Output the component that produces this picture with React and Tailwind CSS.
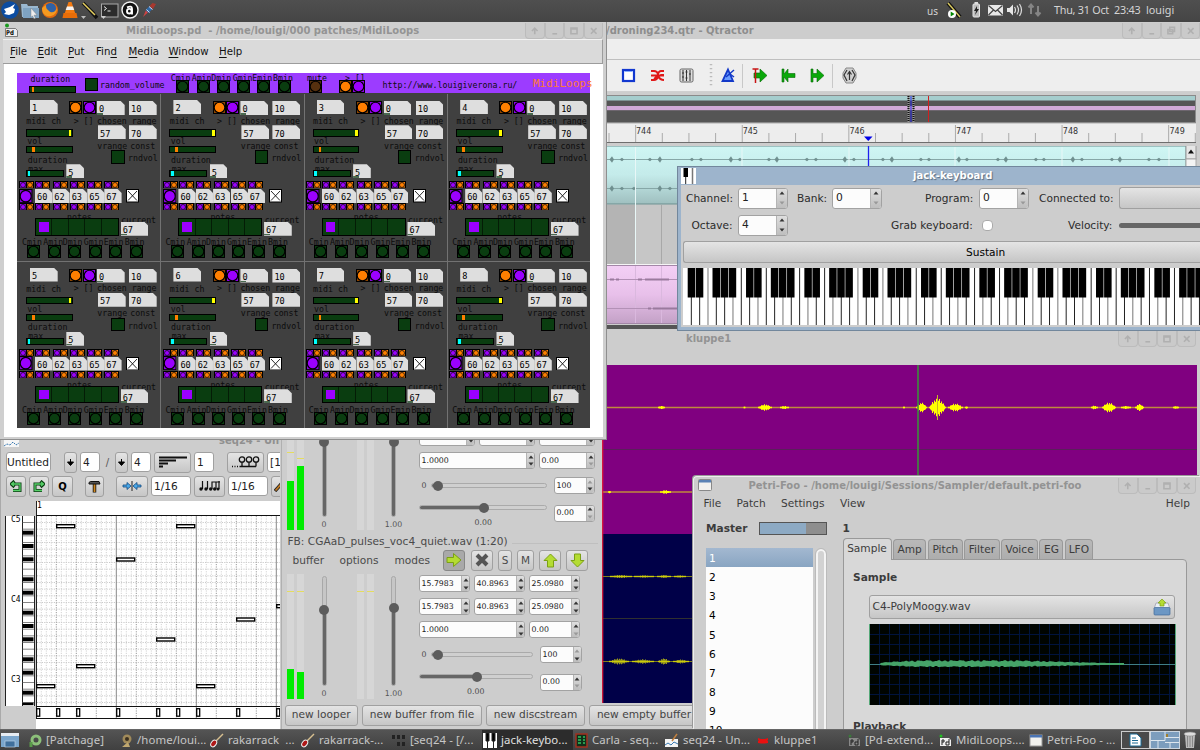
import React from "react";

const UI = "font-['DejaVu_Sans',sans-serif]";
const MONO = "font-['DejaVu_Sans_Mono',monospace]";
const PANEL = "font-['Noto_Sans',sans-serif]";

/* ---------- shared widgets ---------- */

function WinButtons({ className = "", mid = "max" }) {
  const glyphs = [
    <path key="u" d="M9 12V6M6 8.5L9 5.5L12 8.5" />,
    <path key="m" d="M6.5 11.5h5" />,
    mid === "max" ? <path key="x" d="M6 5.5h6.5v6H6zM6 6.3h6.5" /> : <path key="x" d="M8 4.500h5v4.500h-5zM6 7h5v4.500H6z" />,
    <path key="c" d="M6 5.5l6 6M12 5.500l-6 6" />,
  ];
  return (
    <div className={"flex h-4 " + className}>
      {glyphs.map((g, i) => (
        <div key={i} className="h-4 flex-1 rounded-b-sm border border-t-0 border-[#bcbcbc] bg-[#cacaca]">
          <svg viewBox="0 0 18 16" className="h-full w-full" fill="none" stroke="#b0b0b0" strokeWidth="1.700">{g}</svg>
        </div>
      ))}
    </div>
  );
}

function Spin({ value, className = "", small = false, dimUp = false, dimDown = false }) {
  return (
    <div className={"flex overflow-hidden rounded-[3px] border border-[#a2a2a2] bg-[#fcfcfc] " + className}>
      <div className={"flex flex-1 items-center leading-none text-[#222] " + (small ? "pl-[2px] text-[7.8px]" : "pl-[3px] text-[10.7px]")}>{value}</div>
      <div className={"flex flex-col items-center justify-around border-l border-[#b4b4b4] bg-linear-to-b from-[#dedede] to-[#bebebe] " + (small ? "w-[8px]" : "w-[11px]")}>
        <svg width="6" height="4" viewBox="0 0 6 4"><path d="M0.500 3.500L3 0.500L5.500 3.500z" fill={dimUp ? "#999" : "#333"} /></svg>
        <svg width="6" height="4" viewBox="0 0 6 4"><path d="M0.500 0.500L3 3.500L5.500 0.500z" fill={dimDown ? "#999" : "#333"} /></svg>
      </div>
    </div>
  );
}

const BTN = "flex items-center rounded-[3px] border border-[#a0a0a0] bg-linear-to-b from-[#e4e4e4] to-[#c6c6c6] ";

/* ---------- top panel ---------- */

function TopPanel() {
  return (
    <div className={"absolute inset-x-0 top-0 flex h-[22px] items-center bg-linear-to-b from-[#4f4f4f] to-[#454545] text-[10.800px] leading-none text-[#d4d4d4] " + PANEL}>
      <svg width="160" height="22" viewBox="0 0 160 22">
        <circle cx="10" cy="10" r="8.800" fill="#0c4ca0" />
        <path d="M4 9l6-2 5-3-2 4 2 1-1 4-5 2-5-1 2-2z" fill="#fff" />
        <path d="M21 4h6l1 2h10v11H22z" fill="#9ab8d0" /><path d="M23 8h16v10H23z" fill="#7fa3c2" />
        <path d="M31 8l6 7-3 .2 1.500 3-1.500.6-1.500-3-1.500 1.500z" fill="#eee" stroke="#777" strokeWidth=".4" />
        <circle cx="50" cy="10" r="8" fill="#e06a10" /><circle cx="50.500" cy="8.500" r="5.500" fill="#2f62a8" />
        <path d="M42 8c0 7 5 9 9 8s6-4 6-8c-2 5-6 5-8 3s-3-2-3-6z" fill="#f59a20" />
        <path d="M68.500 2h3l4 12h-11z" fill="#f47a10" /><path d="M67 6.500h6l1.200 3.500h-8.500z" fill="#f3f3f3" /><path d="M63.500 13h13l1 5h-15z" fill="#e96d08" />
        <path d="M81 16h5l-2.500 3z" fill="#bbb" /><path d="M83 3l11 11M88 8l9 10" stroke="#111" strokeWidth="3.500" /><path d="M83 3l12 12" stroke="#e6d060" strokeWidth="1.500" />
        <rect x="101.500" y="4" width="16.500" height="13" fill="#2c2c2c" stroke="#aaa" /><path d="M104 6.500l2.500 2-2.500 2M107.500 11h3" stroke="#eee" fill="none" /><path d="M101 16h5l-2.500 3z" fill="#ccc" />
        <circle cx="130" cy="10" r="8" fill="#111" stroke="#f4f4f4" strokeWidth="1.400" />
        <circle cx="129.300" cy="11.200" r="2.300" fill="none" stroke="#fff" strokeWidth="1.900" /><path d="M127 7.300q5-2 5 1.500V14.500" fill="none" stroke="#fff" strokeWidth="1.900" />
        <path d="M143 17l3-7 2.500 2z" fill="#c44" /><path d="M145.500 10l4-4 3 3-4 4z" fill="#2f6aa8" /><path d="M149.500 6l3-3 3.500 1-3 5z" fill="#a8382f" /><path d="M146.500 9.500l3 3M149 6.500l3.500 3" stroke="#d8d8e8" />
      </svg>
      <span className="ml-auto mr-[8px] text-[10px]">us</span>
      <svg width="98" height="22" viewBox="0 0 98 22" className="mr-[10px]">
        <path d="M2 3l12 14" stroke="#111" strokeWidth="4" /><path d="M2 3l12 14" stroke="#d8c860" strokeWidth="1.500" />
        <circle cx="6" cy="14" r="4" fill="#fff" /><path d="M4.700 11.500v5l3.800-2.500z" fill="#080" />
        <rect x="27" y="4" width="6.500" height="13" rx="1" fill="#bdbdbd" stroke="#e8e8e8" /><rect x="28.500" y="2" width="3.500" height="2" fill="#ddd" /><path d="M31 6l-3 5h2l-1 4 4-6h-2z" fill="#222" />
        <rect x="42" y="5" width="15" height="10.500" fill="#e8e8e8" /><path d="M42.500 5.500l7 6 7-6M42.500 15l5-5M56.500 15l-5-5" fill="none" stroke="#444" strokeWidth="1.200" />
        <path d="M61 8h2.500l3.500-3.500v11L63.500 12H61z" fill="#e6e6e6" /><path d="M68.500 7q2 3 0 6M71 5.500q3 4.500 0 9M73.500 4q4 6 0 12" fill="none" stroke="#dcdcdc" strokeWidth="1.200" />
        <path d="M85 14V5M82.500 7.500L85 4.500l2.500 3M92 6v9M89.500 12.500L92 15.500l2.500-3" fill="none" stroke="#858585" strokeWidth="2" />
      </svg>
      <span className="-mt-[2px] w-[85px] whitespace-nowrap tracking-[-0.250px]">Thu, 31 Oct&nbsp; 23:43</span>
      <span className="-mt-[2px] ml-[7px] mr-[24px] w-[30px]">louigi</span>
    </div>
  );
}

/* ---------- Pd patch ---------- */

function Txt({ x, y, children, size = 8.25, color = "#0c0c0c" }) {
  return (
    <span className={"absolute whitespace-pre leading-none " + MONO} style={{ left: x, top: y + 0.3 - size / 2, fontSize: size, color }}>
      {children}
    </span>
  );
}

function NumBox({ x, y, w = 27.7, v, mark = false }) {
  return (
    <div
      className={"absolute flex h-[14px] items-center bg-[#dedede] pl-[2px] pt-[3.500px] text-[8.600px] leading-none text-black [clip-path:polygon(0_0,calc(100%-4px)_0,100%_4px,100%_100%,0_100%)] " + MONO}
      style={{ left: x, top: y, width: w }}
    >
      {v}
      {mark && <i className="absolute bottom-[0.500px] left-0 h-[1.500px] w-[6px] bg-[#4a6a50]" />}
    </div>
  );
}

function Bang({ x, y, s = 13, h, bg = "#0a3d10", fill }) {
  return (
    <svg className="absolute" style={{ left: x, top: y }} width={s} height={h || s} viewBox="0 0 13 13" preserveAspectRatio="none">
      <rect x=".5" y=".5" width="12" height="12" fill={bg} stroke="#000" />
      <circle cx="6.500" cy="6.500" r="5.300" fill={fill || bg} stroke="#000" strokeWidth="1.100" />
    </svg>
  );
}

function Slider({ x, y, w, knob, color }) {
  return (
    <div className="absolute h-[7.300px] border border-black bg-[#0a3d10]" style={{ left: x, top: y, width: w }}>
      <i className="absolute top-0 h-full w-[2.700px]" style={{ left: knob, background: color }} />
    </div>
  );
}

function Toggle({ x, y }) {
  return <div className="absolute size-[13.300px] border border-black bg-[#0a3d10]" style={{ left: x, top: y }} />;
}

const ORANGE = "#ff7f00";
const VIOLET = "#9b00ff";
const CHORDS = ["Cmin", "Amin", "Dmin", "Gmin", "Emin", "Bmin"];
const CHORD_TXT = [5, 26.3, 45.7, 66.7, 86.7, 107.7];
const CHORD_BANG = [10.3, 31.3, 51.3, 72, 92, 113];

function Pair({ x, y }) {
  return (
    <svg className="absolute" style={{ left: x, top: y }} width="15" height="7.300" viewBox="0 0 15 7.300">
      <rect width="15" height="7.300" fill="#000" />
      <rect x="1" y="1" width="5.800" height="5.600" fill={VIOLET} /><circle cx="4" cy="4" r="2.500" fill={VIOLET} stroke="#111" strokeWidth=".8" />
      <rect x="8.200" y="1" width="5.800" height="5.600" fill={ORANGE} /><circle cx="11" cy="4" r="2.500" fill={ORANGE} stroke="#111" strokeWidth=".8" />
    </svg>
  );
}

function Module({ n, x, y }) {
  const px = [2.3, 18.3, 35.7, 53.3, 70.3, 87.3];
  const nx = [18, 35.3, 52.7, 70.3, 87.3];
  return (
    <div className="absolute h-[167px] w-[143.300px]" style={{ left: x, top: y }}>
      <NumBox x={13} y={7} v={n} />
      <Bang x={52.3} y={8} fill={ORANGE} bg="#8a4400" /><Bang x={65.5} y={8} fill={VIOLET} bg="#8a00e0" />
      <NumBox x={80} y={8} v="0" mark /><NumBox x={112} y={8} v="10" />
      <Txt x={9.3} y={28.3}>midi ch</Txt><Txt x={56.7} y={27.7}>{"> []"}</Txt><Txt x={80} y={27.7}>chosen</Txt><Txt x={114.7} y={27.7}>range</Txt>
      <Slider x={9} y={36.3} w={46.5} knob={41.7} color="#ffff00" />
      <NumBox x={81} y={32.3} v="57" /><NumBox x={112} y={32.3} v="70" />
      <Txt x={10.3} y={48.3}>vol</Txt>
      <Slider x={9} y={53} w={46.5} knob={5} color={ORANGE} />
      <Txt x={80.3} y={52.7}>vrange</Txt><Txt x={113.3} y={52.7}>const</Txt>
      <Txt x={10.7} y={66.7}>duration</Txt>
      <Toggle x={94.3} y={57.3} /><Txt x={111} y={65}>rndvol</Txt>
      <Txt x={11.3} y={75.5}>max</Txt>
      <Slider x={9} y={77} w={38} knob={0.7} color="#00ffff" />
      <NumBox x={49.3} y={71.3} w={17.7} v="5" mark />
      {px.map((p) => <React.Fragment key={p}><Pair x={p} y={88} /><Pair x={p} y={110} /></React.Fragment>)}
      <Bang x={2.3} y={95.5} s={13.5} h={14.3} fill={VIOLET} bg="#8a00e0" />
      {["60", "62", "63", "65", "67"].map((v, i) => <NumBox key={v} x={nx[i]} y={96} w={17.3} v={v} />)}
      <svg className="absolute" style={{ left: 109, top: 96 }} width="13" height="13.500" viewBox="0 0 13 13.500">
        <rect x=".5" y=".5" width="12" height="12.500" fill="#fff" stroke="#000" /><path d="M2 2l9 9.500M11 2l-9 9.500" stroke="#111" strokeWidth=".9" />
      </svg>
      <Txt x={50} y={124}>notes</Txt><Txt x={104.3} y={126.7}>current</Txt>
      <div className="absolute left-[18px] top-[125.300px] grid h-[17.500px] w-[84px] grid-cols-5 border border-black bg-[#0a3d10]">
        {[0, 1, 2, 3, 4].map((i) => (
          <div key={i} className="flex items-center pl-[3px] not-last:border-r not-last:border-[#041c06]">{i === 0 && <i className="size-[9.500px] bg-[#9b00ff]" />}</div>
        ))}
      </div>
      <NumBox x={103.7} y={128.7} v="67" mark />
      {CHORDS.map((c, i) => <Txt key={c} x={CHORD_TXT[i]} y={149}>{c}</Txt>)}
      {CHORDS.map((c, i) => <Bang key={c} x={CHORD_BANG[i]} y={151.7} />)}
    </div>
  );
}

function PdWindow() {
  const menu = [["F", "ile", "w-[27.500px]"], ["E", "dit", "w-[30.500px]"], ["P", "ut", "w-[28px]"], ["", "Find", "w-[32.500px]"], ["M", "edia", "w-[40px]"], ["W", "indow", "w-[50.500px]"], ["H", "elp", "w-[30px]"]];
  return (
    <div className={"absolute left-0 top-[22px] flex h-[418px] w-[607px] flex-col border-b border-r border-[#8f8f8f] bg-[#cfcfcf] " + UI}>
      <div className="flex h-[17px] items-center">
        <svg width="22" height="17" viewBox="0 0 22 17" className="shrink-0">
          <path d="M5.500 6.500h10l2 2v6h-12z" fill="#eee" stroke="#555" strokeWidth=".7" /><circle cx="7" cy="3.500" r="2" fill="#1a9a20" />
          <text x="6" y="13" fontSize="6.500" fontWeight="bold" fontFamily="DejaVu Sans Mono">Pd</text>
        </svg>
        <div className="ml-[104px] whitespace-pre text-[10px] font-bold leading-none text-[#949494]">MidiLoops.pd  - /home/louigi/000 patches/MidiLoops</div>
        <WinButtons className="ml-auto mr-[3px] w-[78px]" />
      </div>
      <div className="ml-[3px] mr-[3px] flex h-[25px] items-center border-b border-r border-t border-[#9c9c9c] border-t-[#f2f2f2] bg-[#dadada] pl-[7px] pt-[2px] text-[10.200px] leading-none text-[#111]">
        {menu.map(([u, r, w]) => (
          <span key={u + r} className={w}>{u ? <><u className="underline-offset-2">{u}</u>{r}</> : <>Fin<u className="underline-offset-2">d</u></>}</span>
        ))}
      </div>
      <div className="relative ml-[4px] h-[373px] w-[599px] overflow-hidden bg-white">
        <div className="absolute left-[13px] top-[9px] h-[355px] w-[573px] bg-[#404040]">
          <div className="absolute left-0 top-0 h-[20px] w-full bg-[#9c3cff]" />
          <Txt x={13.5} y={6}>duration</Txt>
          <Slider x={12.3} y={12.5} w={46.7} knob={1.5} color={ORANGE} />
          <Toggle x={68} y={4.7} /><Txt x={83} y={11.5}>random_volume</Txt>
          {CHORDS.map((c, i) => <Txt key={c} x={[153.7, 174.7, 194.3, 215.7, 235.3, 256][i]} y={4.5}>{c}</Txt>)}
          {CHORDS.map((c, i) => <Bang key={c} x={[159, 179.7, 199.7, 220.3, 240.3, 261][i]} y={6.5} />)}
          <Txt x={290} y={4.5}>mute</Txt><Bang x={292.3} y={6.5} bg="#55300f" />
          <Txt x={328} y={4.5}>{"> []"}</Txt>
          <Bang x={322.3} y={6.5} fill={ORANGE} bg="#8a4400" /><Bang x={335.3} y={6.5} fill={VIOLET} bg="#8a00e0" />
          <Txt x={365.5} y={11.5} size={8.3}>http://www.louigiverona.ru/</Txt>
          <Txt x={516} y={10} size={11} color="#ff7a35">MidiLoops</Txt>
          {[143.3, 286.7, 430].map((x) => <i key={x} className="absolute bottom-0 top-[21px] w-px bg-[#727272]" style={{ left: x }} />)}
          <i className="absolute left-0 top-[187.500px] h-px w-full bg-[#727272]" />
          {[1, 2, 3, 4, 5, 6, 7, 8].map((n, i) => <Module key={n} n={n} x={(i % 4) * 143.4} y={i < 4 ? 20 : 187.5} />)}
        </div>
      </div>
    </div>
  );
}

/* ---------- Qtractor ---------- */

function Blips({ y, xs, c }) {
  return xs.map((x, i) => {
    const h = i % 3 === 0 ? 3.2 : 1.8;
    return <path key={x} d={`M${x - 2.5} ${y}L${x} ${y - h}L${x + 2} ${y}L${x} ${y + h}z`} fill={c} />;
  });
}

function Qtractor() {
  return (
    <div className={"absolute left-[604px] top-[22px] flex h-[309px] w-[596px] flex-col bg-[#cdcdcd] " + UI}>
      <div className="flex h-[17px] items-center pl-[2px]">
        <div className="text-[10px] font-bold leading-none text-[#8d8d8d]">/droning234.qtr - Qtractor</div>
        <WinButtons className="ml-auto w-[78px]" mid="restore" />
      </div>
      <div className="h-[21px] border-b border-[#bfbfbf] bg-[#eeeeee]" />
      <div className="h-[32px] border-b border-[#cfcfcf] bg-[#eeeeee]">
        <svg width="596" height="31" viewBox="0 0 596 31">
          <rect x="19" y="10" width="11" height="11" fill="#fff" stroke="#1238d0" strokeWidth="2.200" /><path d="M20.500 11.500h8" stroke="#8ab0ff" />
          <path d="M47 11h3q3 0 4 3t3 1h3M47 15.500h13M47 20h3q3 0 4-3M60 11h-3q-2 0-3 3t-4 5M54 16q2 4 6 4" stroke="#e01818" strokeWidth="1.900" fill="none" />
          <rect x="76" y="9" width="13" height="13" rx="1.500" fill="#ddd" stroke="#666" /><path d="M79 10v11M82.500 10v11M86 10v11M78 13h2M78 17h2M81.500 12h2M81.500 18h2M85 14h2" stroke="#333" />
          <path d="M107 4v24" stroke="#bbb" strokeWidth="2.500" strokeDasharray="1.200 2.800" />
          <path d="M124 9.500l5 11.500h-10.500z" fill="#6a9cff" stroke="#1238c8" strokeWidth="1.800" /><path d="M122 17l8-7M126 14l4 3" stroke="#1238c8" strokeWidth="1.500" />
          <path d="M138.500 4v24M228.500 4v24" stroke="#c8c8c8" />
          <path d="M150 13h6v-4l7 6.500-7 6.500v-4h-6z" fill="#0aa80a" stroke="#076a07" strokeWidth=".6" /><path d="M151.500 9v14M148.500 9h6" stroke="#c81414" strokeWidth="1.500" />
          <path d="M178 9v13h2v-5l4 5v-4.500h7v-4h-7V9l-4 5V9z" fill="#0aa80a" stroke="#076a07" strokeWidth=".6" />
          <path d="M207 9v13h2v-4.500h4V22l7-6.500L213 9v4.500h-4V9z" fill="#0aa80a" stroke="#076a07" strokeWidth=".6" />
          <path d="M242 8h7l3 5v5l-3 5h-7l-3-5v-5z" fill="#d0d0d0" stroke="#888" /><path d="M243 10l-3 5 3 6M248 10l3 5-3 6M245.500 20v-7M243.500 14.500l2-3 2 3" stroke="#333" strokeWidth="1.200" fill="none" />
        </svg>
      </div>
      <div className="mt-[3px] h-[28px] w-[592px] border border-[#8a8a8a] bg-[#555]">
        <svg width="590" height="26" viewBox="0 0 590 26">
          <rect y="0" width="590" height="4.500" fill="#a5cdcd" /><rect y="10" width="590" height="4.200" fill="#d0a8d6" />
          <path d="M303.500 0v26M308.500 0v26" stroke="#999" strokeWidth="2" /><path d="M303.500 0v26M308.500 0v26" stroke="#111" strokeWidth="2" strokeDasharray="1 1" /><path d="M306 0v26" stroke="#2222e0" /><path d="M323.500 0v26" stroke="#d02020" />
        </svg>
      </div>
      <div className="mt-px h-[19px] w-[592px] border-b border-[#6e6e6e] bg-[#ededed]">
        <svg width="592" height="18" viewBox="0 0 592 18">
          {Array.from({ length: 23 }, (_, i) => <path key={i} d={`M${5 + i * 26.65} ${(i - 1) % 4 === 0 ? 1 : 9}v18`} stroke="#aaa" />)}
          {[744, 745, 746, 747, 748, 749].map((n, i) => <text key={n} x={32 + i * 106.7} y="9.500" fontSize="8" fill="#333" fontFamily="DejaVu Sans">{n}</text>)}
          <path d="M260 12.500h8.500l-4.200 4.500z" fill="#0000e8" />
        </svg>
      </div>
      <div className="mt-[3px] flex-1">
        <svg width="596" height="185" viewBox="0 0 596 185">
          <defs>
            <linearGradient id="cy" x1="0" y1="0" x2="0" y2="1"><stop offset="0" stopColor="#cff6f4" /><stop offset=".5" stopColor="#c4ebea" /><stop offset="1" stopColor="#9fbfbf" /></linearGradient>
            <linearGradient id="pk" x1="0" y1="0" x2="0" y2="1"><stop offset="0" stopColor="#f3cff5" /><stop offset=".5" stopColor="#e8c0ea" /><stop offset="1" stopColor="#c3a1c6" /></linearGradient>
          </defs>
          <rect y="0" width="582" height="58" fill="url(#cy)" stroke="#6b8f8f" />
          <path d="M0 13.500h582M0 42.500h80" stroke="#86a7a7" />
          <Blips y={13.5} c="#6f8f8f" xs={[8, 18, 46, 56, 88, 97, 127, 136, 165, 173, 203, 212, 241, 250, 279, 288, 317, 325, 355, 363, 394, 402, 432, 440, 469, 478, 508, 516, 545, 555]} />
          <Blips y={42.5} c="#6f8f8f" xs={[8, 18, 30, 56, 66]} />
          <rect y="59" width="582" height="59" fill="#c6c6c6" /><rect y="59" width="31" height="59" fill="#b4b4b4" />
          <path d="M31.500 1v120M138 1v40M245 1v40M351 1v40M458 1v40M565 1v40" stroke="#e8f7f7" /><path d="M57.500 59v60" stroke="#a8a8a8" />
          <rect y="119.500" width="582" height="58" fill="url(#pk)" stroke="#a487a8" />
          <path d="M31.500 120v57M57.500 120v57" stroke="#dab8de" />
          <path d="M0 133.500h80M0 162.500h80" stroke="#b391b6" />
          <path d="M6 133.500h4M12 133.500h3M34 133.500h4M41 133.500h24M44 162.500h3M49 162.500h24" stroke="#9a7a9d" strokeWidth="1.800" />
          <path d="M0 118.500h582" stroke="#f5f5f5" /><rect y="179" width="596" height="4" fill="#555" />
          <path d="M264.500 -1v30" stroke="#2020f0" strokeWidth="1.300" />
          <rect x="582" y="-1" width="10" height="14" fill="#e6e6e6" stroke="#999" /><path d="M584 7.500l3-4 3 4z" fill="#111" /><rect x="582" y="13" width="10" height="20" fill="#f4f4f4" stroke="#aaa" />
        </svg>
      </div>
    </div>
  );
}

/* ---------- jack-keyboard ---------- */

function JackKeyboard() {
  const blacks = [4.7, 12.8, 29.5, 37.6, 45.7];
  return (
    <div className={"absolute left-[677px] top-[166px] flex h-[165px] w-[523px] flex-col border-b border-l border-t border-[#72879c] bg-[#9db4cc] pl-[3px] " + UI}>
      <div className="flex h-[18px] items-center">
        <svg width="15" height="16" viewBox="0 0 15 16"><rect width="15" height="16" fill="#fff" /><path d="M2.500 0h4.500v9h-4.500z" fill="#000" /><path d="M4.700 9v7" stroke="#222" /><path d="M11.500 0v16" stroke="#777" strokeWidth="1.500" /></svg>
        <div className="ml-[217px] text-[10px] font-bold leading-none text-white [text-shadow:1px_1px_1px_#5a6c80]">jack-keyboard</div>
      </div>
      <div className="flex h-[142px] flex-col bg-[#cdcdcd] text-[10.600px] leading-none text-[#2b2b2b]">
        <div className="mt-[2px] flex h-[22px] items-center pl-[5px]">
          <span className="w-[52px]">Channel:</span><Spin value="1" className="h-[21px] w-[50px]" dimDown />
          <span className="ml-[9px] w-[35px]">Bank:</span><Spin value="0" className="h-[21px] w-[50px]" dimDown />
          <span className="ml-[43px] w-[54px]">Program:</span><Spin value="0" className="h-[21px] w-[50px]" dimDown />
          <span className="ml-[10px] w-[80px]">Connected to:</span><div className={BTN + "h-[22px] flex-1 rounded-r-none border-r-0"} />
        </div>
        <div className="mt-[5px] flex h-[22px] items-center pl-[10.500px]">
          <span className="w-[46.500px]">Octave:</span><Spin value="4" className="h-[21px] w-[50px]" />
          <span className="ml-[103px] w-[91px]">Grab keyboard:</span><div className="size-[11px] rounded-sm border border-[#aaa] bg-white" />
          <span className="ml-[75px] w-[51px]">Velocity:</span><div className="h-[5px] flex-1 rounded-l-full bg-[#666]" />
        </div>
        <div className={BTN + "ml-[2px] mt-[5px] h-[22px] rounded-r-none border-r-0 pl-[282px] text-black"}>Sustain</div>
        <svg width="518" height="58" viewBox="0 0 518 58" className="ml-[2px] mt-[5px]">
          <rect width="518" height="57" fill="#fff" />
          {Array.from({ length: 63 }, (_, i) => <path key={i} d={`M${(i + 1) * 8.33} 0v57`} stroke={i % 3 === 2 ? "#777" : "#222"} strokeWidth="1" />)}
          {Array.from({ length: 9 }, (_, o) => blacks.map((b) => <rect key={o + "-" + b} x={o * 58.33 + b} y="0" width="7.500" height="29.500" fill="#000" />))}
        </svg>
      </div>
    </div>
  );
}

/* ---------- kluppe ---------- */

function Meter({ levels, marks, className = "" }) {
  return (
    <div className={"flex h-[125px] gap-[3px] " + className}>
      {levels.map((l, i) => (
        <div key={i} className="relative flex h-full w-[7px] flex-col justify-end bg-[#d6d6d6]">
          <i className="absolute h-px w-full bg-[#e4dc60]" style={{ top: marks[i] }} />
          <i className="w-full bg-[#00ec00]" style={{ height: l }} />
        </div>
      ))}
    </div>
  );
}

function VSlider({ knob, label }) {
  return (
    <div className="flex w-[40px] flex-col items-center text-[7.800px] leading-none text-[#555]">
      <div className="relative mt-[2px] flex h-[110px] w-[5px] flex-col justify-end rounded-full border border-[#a8a8a8] bg-[#c6c6c6]">
        <i className="w-full rounded-full bg-[#666]" style={{ height: 109 - knob }} />
        <i className="absolute -left-[3.500px] size-[10px] rounded-full bg-[#5c5c5c]" style={{ top: knob - 5 }} />
      </div>
      <div className="mt-[4px]">{label}</div>
    </div>
  );
}

function HSlider({ knob, className = "" }) {
  return (
    <div className={"relative h-[5px] rounded-full border border-[#aaa] bg-[#cfcfcf] " + className}>
      <i className="absolute left-0 top-0 h-full rounded-full bg-[#666]" style={{ width: knob }} />
      <i className="absolute -top-[3.500px] size-[10px] rounded-full bg-[#5c5c5c]" style={{ left: knob - 5 }} />
    </div>
  );
}

function Looper({ title, wide, levels, marks, knobs }) {
  const w3 = wide ? "w-[56.500px]" : "w-[51.500px]";
  const nums = ["15.7983", "40.8963", "25.0980"];
  return (
    <div className="relative h-[169.300px] shrink-0 text-[#4a4a4a]">
      <div className="flex h-[15.500px] items-center whitespace-nowrap pb-[1.500px] pl-[5.500px] text-[10.600px] leading-none">
        {title}<i className="ml-1 mr-1 mt-[4px] h-px flex-1 bg-[#bfbfbf]" />
      </div>
      <div className="flex h-[21px] items-center pl-[10.500px] text-[10.600px] leading-none">
        <span className="w-[47px]">buffer</span><span className="w-[55px]">options</span><span className="w-[48.500px]">modes</span>
        <div className="flex h-[21px] w-[22px] items-center justify-center rounded-[3px] border border-[#888] bg-[#a9a9a9]">
          <svg width="16" height="16" viewBox="0 0 16 16"><path d="M1 5.500h6.500V1.500L15 8l-7.500 6.500v-4H1z" fill="#b4dc32" stroke="#7ba015" /></svg>
        </div>
        <div className={BTN + "ml-[6px] h-[21px] w-[22px] justify-center"}><svg width="14" height="14" viewBox="0 0 14 14"><path d="M2 2l10 10M12 2L2 12" stroke="#555" strokeWidth="4" /></svg></div>
        <div className={BTN + "ml-[5px] h-[21px] w-[14px] justify-center text-[10.500px]"}>S</div>
        <div className={BTN + "ml-[5px] h-[21px] w-[17px] justify-center text-[10.500px]"}>M</div>
        <div className={BTN + "ml-[5px] h-[21px] w-[22px] justify-center"}><svg width="15" height="15" viewBox="0 0 15 15"><path d="M7.500 1L14 7.500h-3.500V14h-6V7.500H1z" fill="#b4dc32" stroke="#7ba015" /></svg></div>
        <div className={BTN + "ml-[5px] h-[21px] w-[22px] justify-center"}><svg width="15" height="15" viewBox="0 0 15 15"><path d="M7.500 14L14 7.500h-3.500V1h-6v6.500H1z" fill="#b4dc32" stroke="#7ba015" /></svg></div>
      </div>
      <div className="mt-[3.500px] flex pl-[5px]">
        <Meter levels={levels} marks={marks} />
        <VSlider knob={knobs[0]} label="0" />
        <Meter levels={[0, 0]} marks={[17, 17]} className="ml-[12.500px]" />
        <VSlider knob={knobs[1]} label="1.00" />
        <div className="ml-[5px] mt-[1px] flex flex-1 flex-col">
          <div className="flex gap-[3.500px]">{nums.map((n) => <Spin key={n} small value={n} className={"h-[17px] " + w3} />)}</div>
          <div className="mt-[6px] flex gap-[3.500px]">{nums.map((n) => <Spin key={n} small value={n} className={"h-[17px] " + w3} />)}</div>
          <div className="mt-[6px] flex gap-[3.500px]">
            <Spin small value="1.0000" className={"h-[17px] " + (wide ? "w-[116.500px]" : "w-[106.500px]")} />
            <Spin small value="0.00" dimDown className={"h-[17px] " + w3} />
          </div>
          <div className="mt-[8px] flex h-[17px] items-center text-[7.800px] leading-none">
            <span className="w-[12px] pl-[3px]">0</span><HSlider knob={6} className={wide ? "w-[116px]" : "w-[102px]"} />
            <Spin small value="100" dimUp className={"ml-[7px] h-[17px] " + (wide ? "w-[41px]" : "w-[42px]")} />
          </div>
          <div className="mt-[10.500px] flex h-[17px] text-[7.800px] leading-none">
            <div className={"pt-[0.500px] " + (wide ? "w-[128px]" : "w-[114px]")}>
              <HSlider knob={wide ? 64 : 57} />
              <div className={"mt-[9px] " + (wide ? "pl-[56px]" : "pl-[48.500px]")}>0.00</div>
            </div>
            <Spin small value="0.00" dimDown className={"ml-[7px] h-[17px] " + (wide ? "w-[41px]" : "w-[42px]")} />
          </div>
        </div>
      </div>
    </div>
  );
}

function spikes(list, y) {
  return list.map(([x, w, h]) => {
    let d = `M${x} ${y}`;
    const n = Math.max(3, Math.round(w));
    const jag = [0.75, 1, 0.6, 0.9, 0.7, 1, 0.8];
    const amp = (k) => Math.max(0.8, h * Math.sin((Math.PI * (k + 0.5)) / n) * jag[(k + Math.round(x)) % 7]);
    for (let k = 0; k < n; k++) d += `L${x + (k * w) / n} ${y - amp(k)}h${w / n}`;
    for (let k = n - 1; k >= 0; k--) d += `L${x + ((k + 1) * w) / n} ${y + amp(k)}h${-w / n}`;
    return <path key={x} d={d + "z"} fill="#ffff00" />;
  });
}

function Kluppe() {
  return (
    <div className={"absolute left-[281px] top-[331px] flex h-[398px] w-[919px] flex-col border-l border-[#b0b0b0] bg-[#cdcdcd] " + UI}>
      <div className="flex h-[34px] items-start pl-[404px]">
        <div className="mt-[3px] text-[10px] font-bold leading-none text-[#939393]">kluppe1</div>
        <WinButtons className="ml-auto mr-[4px] w-[78px]" />
      </div>
      <div className="flex">
        <div className="flex w-[320px] flex-col overflow-hidden">
          <Looper title="" wide levels={[49, 64]} marks={[47, 53]} knobs={[34, 34]} />
          <Looper title="FB: CGAaD_pulses_voc4_quiet.wav (1:20)" levels={[30, 27]} marks={[17, 17]} knobs={[33, 31]} />
        </div>
        <svg width="595" height="338" viewBox="0 0 595 338">
          <rect width="595" height="169" fill="#800080" /><rect y="169" width="595" height="169" fill="#000048" />
          <path d="M0 42.500h595" stroke="#c08a3c" strokeWidth="1.400" />
          <path d="M0 84.500h595" stroke="#5a205a" /><path d="M0 127h100" stroke="#c08a3c" strokeWidth="1.400" />
          {spikes([[56, 7, 1.8], [141.5, 2, 1], [156, 14, 3.3], [178, 9, 1.5], [301, 2, 1], [314, 11, 5], [327, 17, 9], [346, 15, 4], [363, 3, 1.5], [489, 7, 2], [500, 14, 5], [519, 10, 1.5], [533, 9, 3.5], [571, 6, 1.5]], 42.5)}
          <path d="M335.500 30v25" stroke="#c8b820" />
          {spikes([[6, 3, 1.5], [58, 11, 1.8]], 127)}
          <path d="M0 211.500h100M0 296.500h100" stroke="#808018" /><path d="M0 253.500h100" stroke="#303030" />
          <g opacity=".6">{spikes([[8, 22, 1.6], [32, 20, 1.3], [55, 14, 1.6], [72, 12, 1.3]], 211.5)}{spikes([[7, 20, 3], [30, 22, 2.2], [56, 12, 3], [71, 16, 2]], 296.5)}</g>
          <path d="M316 0v120" stroke="#3c8c3c" strokeWidth="1.600" /><path d="M0.700 0v338" stroke="#e01838" strokeWidth="1.200" />
        </svg>
      </div>
      <div className="mt-px flex gap-[4px] pl-[2.500px] text-[10.600px] leading-none text-[#444]">
        <div className={BTN + "h-[21px] w-[73.500px] justify-center pb-[1px]"}>new looper</div>
        <div className={BTN + "h-[21px] w-[120px] justify-center pb-[1px]"}>new buffer from file</div>
        <div className={BTN + "h-[21px] w-[99px] justify-center pb-[1px]"}>new discstream</div>
        <div className={BTN + "h-[21px] w-[110px] justify-center pb-[1px]"}>new empty buffer</div>
      </div>
    </div>
  );
}

/* ---------- seq24 ---------- */

const FIELD = "flex h-[20px] items-center overflow-hidden whitespace-nowrap rounded-[3px] border border-[#a0a0a0] bg-white pl-[2px] text-[10.600px] leading-none text-[#222] ";

function Seq24() {
  const notes = [[56, 526], [116, 559.3], [176, 526], [156, 639.3], [236, 619.3], [76, 666], [36, 686], [196, 686], [276, 606]];
  const black = [532.7, 546, 559.3, 579.3, 592.7, 612.7, 626, 639.3, 659.3, 672.7, 692.7, 704.7];
  const rows = Array.from({ length: 28 }, (_, i) => 522.5 + i * 6.667);
  return (
    <div className={"absolute left-0 top-[433px] flex h-[296px] w-[280px] flex-col overflow-hidden border-l border-[#aaa] bg-[#cdcdcd] " + UI}>
      <div className="flex h-[18px] items-center">
        <svg width="20" height="16" viewBox="0 0 20 16" className="shrink-0"><rect x="3" y="4" width="15" height="9" fill="#f6f6f6" /><path d="M3 12l3-2 3 1 3-3 3 3 3-2" fill="none" stroke="#3878b0" strokeDasharray="2 1" /></svg>
        <div className="-mt-[2px] ml-[198px] whitespace-nowrap text-[10px] font-bold leading-none text-[#909090]">seq24 - Untitled</div>
      </div>
      <div className="flex h-[22px] items-center pl-[5px]">
        <div className={FIELD + "w-[45px] shrink-0"}><span className="-ml-[2px]">Untitled</span></div>
        <div className={BTN + "ml-[13px] h-[21px] w-[13px] shrink-0 justify-center"}><svg width="7" height="7" viewBox="0 0 7 7"><path d="M3.500 0v6M0.500 3l3 3.500 3-3.500z" fill="#000" stroke="#000" /></svg></div>
        <div className={FIELD + "ml-[3px] w-[20px] shrink-0"}>4</div>
        <span className="w-[15px] shrink-0 text-center text-[10px] text-[#555]">/</span>
        <div className={BTN + "h-[21px] w-[13px] shrink-0 justify-center"}><svg width="7" height="7" viewBox="0 0 7 7"><path d="M3.500 0v6M0.500 3l3 3.500 3-3.500z" fill="#000" stroke="#000" /></svg></div>
        <div className={FIELD + "ml-[3px] w-[20px] shrink-0"}>4</div>
        <div className={BTN + "ml-[3px] h-[21px] w-[37px] shrink-0 justify-center"}><svg width="28" height="12" viewBox="0 0 28 12"><path d="M0 1.500h28M0 4.500h17M0 7.500h9M0 10.500h4" stroke="#111" strokeWidth="1.800" /></svg></div>
        <div className={FIELD + "ml-[3px] w-[20px] shrink-0"}>1</div>
        <div className={BTN + "ml-[13px] h-[21px] w-[37px] shrink-0 justify-center"}><svg width="28" height="12" viewBox="0 0 28 12"><g fill="none" stroke="#111" strokeWidth="1.300"><circle cx="10" cy="3.500" r="2.700" /><circle cx="17" cy="3.500" r="2.700" /><circle cx="24" cy="3.500" r="2.700" /><path d="M10 6v4.500M17 6v4.500M24 6v4.500M8 10.500h16" /><path d="M0 10.500h8" strokeDasharray="1 1.500" /></g></svg></div>
        <div className={FIELD + "ml-[3px] w-[40px] shrink-0"}>[1/1</div>
      </div>
      <div className="mt-[2.500px] flex h-[21px] items-center pl-[5px]">
        <div className={BTN + "h-[21px] w-[20px] shrink-0 justify-center"}><svg width="12" height="12" viewBox="0 0 12 12"><path d="M2 4h8v6.500H3M4.500 1L1 4l3.500 3" fill="none" stroke="#0b3d12" strokeWidth="3" /><path d="M2 4h8v6.500H3M4 2L1.500 4 4 6" fill="none" stroke="#56d068" strokeWidth="1.300" /></svg></div>
        <div className={BTN + "ml-[3px] h-[21px] w-[20px] shrink-0 justify-center"}><svg width="12" height="12" viewBox="0 0 12 12"><path d="M10 4H2v6.500h7M7.500 1L11 4 7.500 7" fill="none" stroke="#0b3d12" strokeWidth="3" /><path d="M10 4H2v6.500h7M8 2l2.500 2L8 6" fill="none" stroke="#56d068" strokeWidth="1.300" /></svg></div>
        <div className={BTN + "ml-[3px] h-[21px] w-[21px] shrink-0 justify-center text-[10px] font-bold text-black"}>Q</div>
        <div className={BTN + "ml-[12px] h-[21px] w-[19px] shrink-0 justify-center"}><svg width="13" height="13" viewBox="0 0 13 13"><path d="M1 4V2.500l1.500-1H11L12 4H1z" fill="#555" stroke="#111" /><path d="M6.500 4v8.500" stroke="#111" strokeWidth="3.500" /><path d="M6.500 4.500v7.500" stroke="#d08820" strokeWidth="1.800" /></svg></div>
        <div className={BTN + "ml-[12px] h-[21px] w-[32px] shrink-0 justify-center"}><svg width="20" height="10" viewBox="0 0 20 10"><path d="M1 4h4V1.500L9 5 5 8.500V6H1zM19 4h-4V1.500L11 5l4 3.500V6h4z" fill="#4aa8e8" stroke="#134a80" strokeWidth=".8" /><path d="M10 0v10" stroke="#222" /></svg></div>
        <div className={FIELD + "ml-[3px] w-[40px] shrink-0"}>1/16</div>
        <div className={BTN + "ml-[3px] h-[21px] w-[31px] shrink-0 justify-center"}><svg width="22" height="10" viewBox="0 0 22 10"><path d="M3.500 0v8M8.500 0v8M13 .5v7.500M13 1h4v7M20 0v8M17 1h4" stroke="#111" fill="none" strokeWidth="1.200" /><g fill="#111"><circle cx="2" cy="8" r="1.700" /><circle cx="7" cy="8" r="1.700" /><circle cx="11.700" cy="8" r="1.700" /><circle cx="15.700" cy="8" r="1.700" /><circle cx="19" cy="8" r="1.500" /></g></svg></div>
        <div className={FIELD + "ml-[3px] w-[40px] shrink-0"}>1/16</div>
        <div className={BTN + "ml-[3px] h-[21px] w-[30px] shrink-0 pl-[2px]"}><svg width="24" height="12" viewBox="0 0 24 12" className="shrink-0"><path d="M1 11L8 3" stroke="#222" strokeWidth="3.500" /><path d="M1.500 10.500L8 3" stroke="#c07a24" strokeWidth="1.800" /></svg></div>
      </div>
      <svg width="280" height="229" viewBox="1 500 280 229" className="mt-[3.500px] shrink-0">
        <rect x="36" y="501" width="245" height="228" fill="#fff" />
        <rect x="5.500" y="516" width="29" height="190" fill="#fff" />
        <path d="M5.500 516v190M36.500 501v218M22.500 516v190" stroke="#222" />
        {rows.map((y) => <path key={y} d={`M22.500 ${y}h12`} stroke="#666" strokeWidth=".8" />)}
        {black.map((y) => <rect key={y} x="22.500" y={y - 2} width="11" height={y > 700 ? 2.5 : 4} fill="#000" />)}
        <path d="M34.500 516v190" stroke="#222" />
        {[["C5", 521.5], ["C4", 602], ["C3", 682]].map(([t, y]) => <text key={t} x="11" y={y} fontSize="8" fontFamily="DejaVu Sans Mono">{t}</text>)}
        <text x="37" y="508" fontSize="8" fontFamily="DejaVu Sans Mono">1</text>
        {rows.map((y) => <path key={y} d={`M37 ${y}h244`} stroke="#c4c4c4" strokeDasharray="1.200 1.200" strokeWidth=".9" />)}
        {Array.from({ length: 49 }, (_, i) => i + 1).map((i) => (
          <path key={i} d={`M${36.3 + i * 5} 516v${i % 4 === 0 ? 202 : 190}`} stroke={i % 16 === 0 ? "#888" : i % 4 === 0 ? "#9a9a9a" : "#cfcfcf"} strokeDasharray={i % 16 === 0 ? "none" : "1.200 1.200"} strokeWidth={i % 4 === 0 ? 1 : 0.9} />
        ))}
        <path d="M36 515.500h245M36 706.500h245M36 718.500h245" stroke="#111" />
        {notes.map(([x, y]) => (
          <g key={x}>
            <rect x={x + 0.7} y={y - 1.3} width="18" height="3" fill="#fff" stroke="#000" strokeWidth="1.400" />
            <rect x={x + 0.7} y="708.700" width="3" height="7.500" fill="#fff" stroke="#000" strokeWidth="1.300" />
          </g>
        ))}
      </svg>
    </div>
  );
}

/* ---------- Petri-Foo ---------- */

function PetriFoo() {
  const tabs = [["Amp", "w-[33.500px]"], ["Pitch", "w-[35px]"], ["Filter", "w-[35.500px]"], ["Voice", "w-[37px]"], ["EG", "w-[24px]"], ["LFO", "w-[28px]"]];
  const jag = [0.8, 1, 0.7, 0.95, 0.6, 1, 0.85, 0.75, 1, 0.9, 0.65];
  const amp = (x, k) => Math.max(0.5, 3.2 * Math.sin(Math.min(1, x / 60) * 1.57) * (x < 150 ? 1 : Math.max(0, 1 - (x - 150) / 110)) * jag[Math.floor(x / 3 + k) % 11]);
  let top = "M11 39.500", bottom = "";
  for (let x = 12; x < 256; x += 1) {
    top += `L${x} ${39.5 - amp(x, 0)}`;
    bottom = `L${x} ${40.5 + amp(x, 4) * 0.8}` + bottom;
  }
  return (
    <div className={"absolute left-[693px] top-[476px] flex h-[253px] w-[507px] flex-col overflow-hidden rounded-tl border-l border-t border-[#eee] bg-[#cdcdcd] text-[10.600px] leading-none text-[#3c3c3c] shadow-[-1px_-1px_0_#999] " + UI}>
      <div className="flex h-[18px] items-center pl-[4px]">
        <svg width="14" height="13" viewBox="0 0 14 13"><rect x=".5" y=".5" width="13" height="11" rx="1" fill="#f1f1ee" stroke="#888" /><rect x="1" y="1" width="12" height="2.500" fill="#5a82b4" /></svg>
        <div className="ml-[36.500px] whitespace-nowrap text-[10px] font-bold text-[#939393]">Petri-Foo - /home/louigi/Sessions/Sampler/default.petri-foo</div>
        <WinButtons className="ml-auto mr-[4px] w-[78px]" />
      </div>
      <div className="flex h-[17px] items-center pl-[9.500px] pt-[1px]">
        <span className="w-[33px]">File</span><span className="w-[44.500px]">Patch</span><span className="w-[59px]">Settings</span><span>View</span><span className="ml-auto mr-[10px]">Help</span>
      </div>
      <div className="flex h-[218px] pl-[12px]">
        <div className="flex w-[122px] flex-col">
          <div className="mt-[10.500px] flex h-[13px] shrink-0 items-center">
            <span className="w-[53px] pt-[1px] font-bold">Master</span>
            <div className="h-[13px] w-[68px] border border-[#555] bg-[#8e8e8e]"><div className="h-full w-[46px] bg-[#8daac4]" /></div>
          </div>
          <div className="mt-[13.500px] flex gap-[3px]">
            <div className="flex w-[107px] flex-col bg-[#fcfcfc] text-black">
              <div className="flex h-[19.200px] shrink-0 items-center bg-linear-to-b from-[#a3b8d0] to-[#89a5c2] pl-[3px] pt-[1px] text-white">1</div>
              {[2, 3, 4, 5, 6, 7, 8, 9, 10].map((n) => <div key={n} className="flex h-[19.200px] shrink-0 items-center pl-[3px] pt-[1px]">{n}</div>)}
            </div>
            <div className="mt-[1px] h-[200px] w-[10px] rounded-full border-2 border-[#f4f4f4] bg-[#d2d2d2] outline outline-[#bbb]" />
          </div>
        </div>
        <div className="ml-[14.500px] flex w-[344px] flex-col">
          <div className="mt-[12px] h-[14.500px] shrink-0 font-bold">1</div>
          <div className="flex h-[21px] shrink-0 items-end gap-[1.400px]">
            <div className="z-10 -mb-px flex h-[22px] w-[49px] items-center justify-center rounded-t border border-b-0 border-[#999] bg-[#d8d8d8] pb-[1px]">Sample</div>
            {tabs.map(([t, w]) => <div key={t} className={"flex h-[20px] items-center justify-center rounded-t border border-b-0 border-[#999] bg-linear-to-b from-[#b9b9b9] to-[#adadad] " + w}>{t}</div>)}
          </div>
          <div className="h-[180px] shrink-0 rounded-tr border border-[#999] bg-[#d8d8d8] pl-[9.500px]">
            <div className="mt-[12px] font-bold">Sample</div>
            <div className={BTN + "ml-[15.500px] mt-[12.500px] h-[24px] w-[306px] pl-[3px] pr-[3px]"}>
              <span>C4-PolyMoogy.wav</span>
              <svg width="18" height="18" viewBox="0 0 18 18" className="ml-auto"><path d="M3 5h12l2 6H1z" fill="#e8eef4" stroke="#99a" strokeWidth=".7" /><rect x="1" y="9.500" width="16" height="7.500" rx="1" fill="#6c97c4" stroke="#41689a" strokeWidth=".7" /><path d="M9 1l4 4h-2v3H7V5H5z" fill="#b4dc32" stroke="#7ba015" strokeWidth=".7" /></svg>
            </div>
            <svg width="307" height="81" viewBox="0 0 307 81" className="ml-[15.500px] mt-[5px]">
              <rect width="307" height="81" fill="#000400" />
              {Array.from({ length: 30 }, (_, i) => <path key={i} d={`M${i * 10 + 10.5} 0v81`} stroke="#00133c" />)}
              {Array.from({ length: 7 }, (_, i) => <path key={i} d={`M0 ${i * 10 + 10.5}h307`} stroke="#00133c" />)}
              <path d="M0 40.500h307" stroke="#3f7f86" /><path d={top + bottom + "z"} fill="#46a468" /><path d="M.5 0v81M306.500 0v81" stroke="#55a878" />
            </svg>
            <div className="mt-[16px] font-bold">Playback</div>
          </div>
        </div>
      </div>
    </div>
  );
}

/* ---------- task bar ---------- */

const TI = {
  patchage: <g><circle cx="9" cy="7" r="4" fill="none" stroke="#8cc07a" strokeWidth="3" /><path d="M4 14v-5" stroke="#5a9a4a" strokeWidth="3" /></g>,
  horn: <g><circle cx="9" cy="6" r="4.500" fill="#a08a5a" /><circle cx="9" cy="6" r="2" fill="#3a3020" /><path d="M4 14h8l-2-5z" fill="#c0a870" /></g>,
  guitar: <g><path d="M14 1L6 9" stroke="#d8c090" strokeWidth="1.500" /><ellipse cx="5" cy="10.500" rx="2.500" ry="3.700" fill="#b01818" stroke="#eee" transform="rotate(35 5 10)" /></g>,
  seq: <g fill="#222"><path d="M1 2h3v4H1zM6 2h3v4H6zM11 2h3v4h-3zM6 9h3v4H6zM11 9h3v4h-3z" /></g>,
  keys: <g><rect x="1" y="0" width="14" height="15" fill="#fff" /><path d="M4 0h3v8H4zM10 0h3v8h-3zM5.500 8v7M11.500 8v7" fill="#000" stroke="#222" /></g>,
  carla: <g><rect x="3" y="1" width="11" height="13" fill="#10301a" stroke="#a03020" strokeWidth="1.500" /><path d="M5 4h3M5 7h3M5 10h3M10 4h2M10 7h2M10 10h2" stroke="#30c060" strokeWidth="1.500" /></g>,
  untitled: <g><rect x="1" y="6" width="13" height="8" fill="#f4f4f4" /><path d="M1 12l3-2 3 2 3-3 4 2" stroke="#3878b0" fill="none" /><path d="M8 8l5-7" stroke="#c08040" strokeWidth="1.500" /></g>,
  kluppe: <path d="M3 5l3 1h4l3-1v2l-1 .5 1 .5v2l-3 .5H6L3 10V8l1-.5L3 7z" fill="#e81010" />,
  pd: <g><path d="M3 5h9l2 2v6H3z" fill="#888" /><circle cx="4" cy="3" r="1.500" fill="#3a7a3a" /><path d="M5 7v5M5 7h2v2H5M12 6v6h-3V9h3" stroke="#222" fill="none" /></g>,
  midi: <g><path d="M3 5h9l2 2v6H3z" fill="#eee" /><circle cx="4" cy="3" r="1.500" fill="#20c020" /><path d="M5 7v5M5 7h2v2H5M12 6v6h-3V9h3" stroke="#222" fill="none" /></g>,
  win: <g><rect x="2" y="2" width="12" height="11" fill="#f1f1ee" stroke="#999" /><rect x="2" y="2" width="12" height="2.500" fill="#4a74b4" /></g>,
};

const TASKS = [
  ["patchage", "[Patchage]"], ["horn", "/home/loui..."], ["guitar", "rakarrack  ..."], ["guitar", "rakarrack-..."], ["seq", "[seq24 - [/..."], ["keys", "jack-keybo..."],
  ["carla", "Carla - seq..."], ["untitled", "seq24 - Un..."], ["kluppe", "kluppe1"], ["pd", "[Pd-extend..."], ["midi", "MidiLoops...."], ["win", "Petri-Foo - ..."],
];

function TaskBar() {
  return (
    <div className={"absolute bottom-0 left-0 flex h-[21px] w-full items-center border-t border-[#666] bg-linear-to-b from-[#545454] to-[#404040] text-[11.400px] leading-none text-[#c6c6c6] " + PANEL}>
      <svg width="27" height="20" viewBox="0 0 27 20" className="shrink-0"><rect x="1" y="3" width="18" height="14" fill="#7ba6cc" /><rect x="1" y="3" width="18" height="3" fill="#e6ecf2" /><rect x="5" y="11" width="10" height="6" fill="#3f6f9c" stroke="#b8cfe4" strokeWidth=".7" /></svg>
      {TASKS.map(([ic, t], i) => (
        <div key={i} className={"flex h-full w-[91px] shrink-0 items-center " + (i === 5 ? "bg-[#2c2c2c] text-[#e0e0e0]" : "")}>
          <svg width="16" height="15" viewBox="0 0 16 15" className="shrink-0">{TI[ic]}</svg>
          <span className="-mt-[1px] ml-[3px] whitespace-pre tracking-[0.080px]">{t}</span>
        </div>
      ))}
      <svg width="79" height="20" viewBox="0 0 79 20" className="ml-auto shrink-0">
        <rect x=".5" y="1.500" width="28" height="17" fill="#4a4a4a" stroke="#ccc" />
        <path d="M9 4h7l4 4v8H9z" fill="#fff" stroke="#1b6a94" /><path d="M11 8h4M11 10.500h6M11 13h6" stroke="#1b6a94" />
        <rect x="29.500" y="1.500" width="29" height="17" fill="#7c9dbd" stroke="#ccd6e0" /><path d="M30 10.500h14v-9M44 7.500h14M44 12.500h14M37 10.500v8M49 12v6" stroke="#dde6ee" fill="none" /><rect x="45" y="4" width="2" height="3" fill="#a08030" />
        <path d="M64 5h10l-1 13h-8z" fill="#bbb" /><path d="M66.500 6v11M69 6v11M71.500 6v11" stroke="#888" /><ellipse cx="69" cy="4" rx="6" ry="2" fill="#ddd" stroke="#888" strokeWidth=".6" />
      </svg>
    </div>
  );
}

export default function App() {
  return (
    <div className="relative h-[750px] w-[1200px] overflow-hidden bg-[#cdcdcd]">
      <Qtractor />
      <Kluppe />
      <Seq24 />
      <JackKeyboard />
      <PetriFoo />
      <PdWindow />
      <TopPanel />
      <TaskBar />
    </div>
  );
}
